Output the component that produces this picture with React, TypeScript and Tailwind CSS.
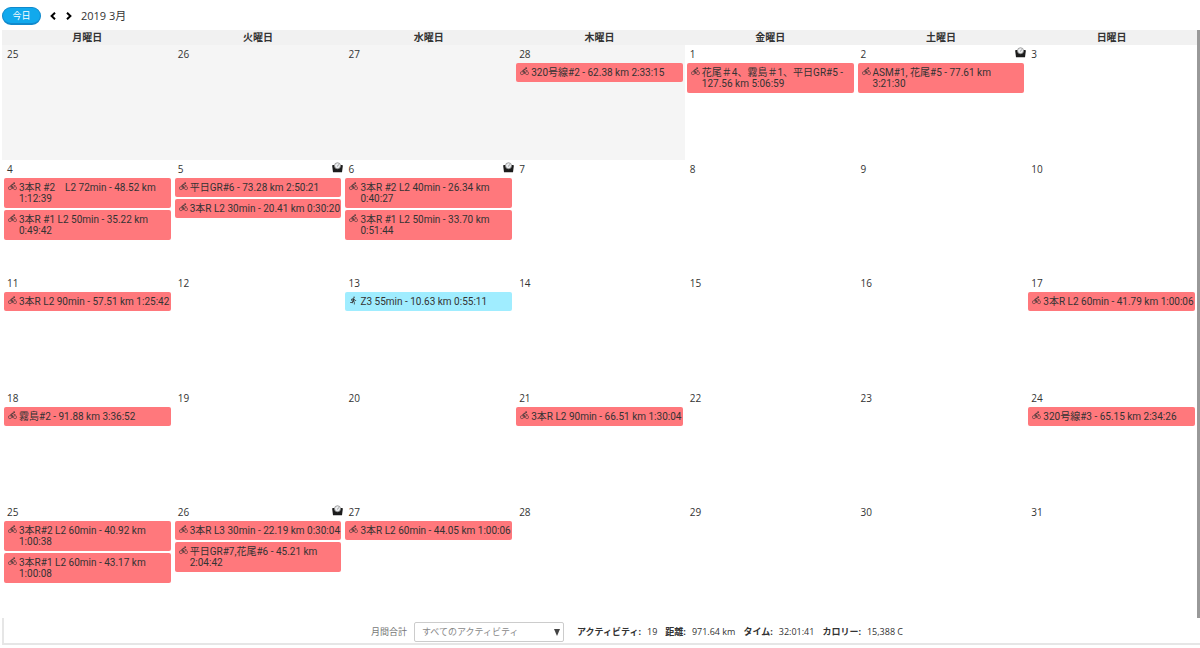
import { MdDirectionsRun } from "react-icons/md";

type Activity = { title: string; kind?: "bike" | "run" };
type Day = { day: number; outside?: boolean; weighed?: boolean; activities?: Activity[] };

const weekdays = ["月曜日", "火曜日", "水曜日", "木曜日", "金曜日", "土曜日", "日曜日"];

const weeks: Day[][] = [
  [
    { day: 25, outside: true },
    { day: 26, outside: true },
    { day: 27, outside: true },
    { day: 28, outside: true, activities: [{ title: "320号線#2 - 62.38 km 2:33:15" }] },
    { day: 1, activities: [{ title: "花尾＃4、霧島＃1、平日GR#5 - 127.56 km 5:06:59" }] },
    { day: 2, weighed: true, activities: [{ title: "ASM#1, 花尾#5 - 77.61 km 3:21:30" }] },
    { day: 3 },
  ],
  [
    {
      day: 4,
      activities: [
        { title: "3本R #2　L2 72min - 48.52 km 1:12:39" },
        { title: "3本R #1 L2 50min - 35.22 km 0:49:42" },
      ],
    },
    {
      day: 5,
      weighed: true,
      activities: [
        { title: "平日GR#6 - 73.28 km 2:50:21" },
        { title: "3本R L2 30min - 20.41 km 0:30:20" },
      ],
    },
    {
      day: 6,
      weighed: true,
      activities: [
        { title: "3本R #2 L2 40min - 26.34 km 0:40:27" },
        { title: "3本R #1 L2 50min - 33.70 km 0:51:44" },
      ],
    },
    { day: 7 },
    { day: 8 },
    { day: 9 },
    { day: 10 },
  ],
  [
    { day: 11, activities: [{ title: "3本R L2 90min - 57.51 km 1:25:42" }] },
    { day: 12 },
    { day: 13, activities: [{ title: "Z3 55min - 10.63 km 0:55:11", kind: "run" }] },
    { day: 14 },
    { day: 15 },
    { day: 16 },
    { day: 17, activities: [{ title: "3本R L2 60min - 41.79 km 1:00:06" }] },
  ],
  [
    { day: 18, activities: [{ title: "霧島#2 - 91.88 km 3:36:52" }] },
    { day: 19 },
    { day: 20 },
    { day: 21, activities: [{ title: "3本R L2 90min - 66.51 km 1:30:04" }] },
    { day: 22 },
    { day: 23 },
    { day: 24, activities: [{ title: "320号線#3 - 65.15 km 2:34:26" }] },
  ],
  [
    {
      day: 25,
      activities: [
        { title: "3本R#2 L2 60min - 40.92 km 1:00:38" },
        { title: "3本R#1 L2 60min - 43.17 km 1:00:08" },
      ],
    },
    {
      day: 26,
      weighed: true,
      activities: [
        { title: "3本R L3 30min - 22.19 km 0:30:04" },
        { title: "平日GR#7,花尾#6 - 45.21 km 2:04:42" },
      ],
    },
    { day: 27, activities: [{ title: "3本R L2 60min - 44.05 km 1:00:06" }] },
    { day: 28 },
    { day: 29 },
    { day: 30 },
    { day: 31 },
  ],
];

const totals = [
  { label: "アクティビティ:", value: "19" },
  { label: "距離:", value: "971.64 km" },
  { label: "タイム:", value: "32:01:41" },
  { label: "カロリー:", value: "15,388 C" },
];

function BikeIcon() {
  return (
    <svg viewBox="0 0 20 20" className="size-[9px] shrink-0 opacity-80" fill="none" stroke="currentColor" aria-hidden="true">
      <circle cx="4.4" cy="13.6" r="3.5" strokeWidth="1.5" />
      <circle cx="15.6" cy="13.6" r="3.5" strokeWidth="1.5" />
      <circle cx="13.6" cy="2.6" r="2.1" fill="currentColor" stroke="none" />
      <path d="M11.6 4.6 6.4 8.6l4 2.4-.6 4" strokeWidth="2.8" strokeLinejoin="round" />
      <path d="m11 5 2.4 3h3.4" strokeWidth="1.8" />
    </svg>
  );
}

function ScaleIcon() {
  return (
    <svg viewBox="0 0 22 22" className="size-[11px]" role="img" aria-label="体重">
      <path d="M1 6h4l6 8 6-8h4l.6 2L20 20.500H2L.4 8z" fill="#1c1c1c" />
      <path d="M3 12h16v8H3z" fill="#1c1c1c" />
      <circle cx="11" cy="7.500" r="6" fill="#eceef0" stroke="#8a8a8a" strokeWidth="1.6" />
      <path d="m11 9 2-4" stroke="#777" strokeWidth="1.4" />
    </svg>
  );
}

function Chevron({ d }: { d: string }) {
  return (
    <svg viewBox="0 0 8 8" className="size-2" fill="none" stroke="currentColor" strokeWidth="2" aria-hidden="true">
      <path d={d} />
    </svg>
  );
}

function ActivityLink({ title, kind = "bike" }: Activity) {
  const run = kind === "run";
  return (
    <a
      href="#activity"
      className={`flex items-start gap-[2px] rounded-[2px] py-1 pl-1 font-['Roboto','Noto_Sans_CJK_JP',sans-serif] text-[10px] leading-[11px] text-[#333] ${
        run ? "bg-[#a0edff]" : "bg-[#ff787c]"
      }`}
    >
      {run ? <MdDirectionsRun className="size-[9px] shrink-0" /> : <BikeIcon />}
      <span>{title}</span>
    </a>
  );
}

export default function App() {
  return (
    <div className="flex min-h-screen flex-col bg-white pb-[3px] pl-[2px] font-['Open_Sans','Noto_Sans_CJK_JP',sans-serif] text-[#333]">
      <header className="flex h-[30px] items-center pt-[2px]">
        <button
          type="button"
          className="h-[18px] w-[39px] rounded-full border border-b-2 border-[#1089cc] bg-[#11a9ed] text-[9px] leading-[14px] text-white"
        >
          今日
        </button>
        <button type="button" aria-label="前の月" className="ml-2 text-black">
          <Chevron d="M6 .7 2.6 4 6 7.3" />
        </button>
        <button type="button" aria-label="次の月" className="ml-2 text-black">
          <Chevron d="M2 .7 5.4 4 2 7.3" />
        </button>
        <h1 className="ml-2 text-[11px]">2019 3月</h1>
      </header>

      <div className="flex flex-1 border-r-[3px] border-[#999]">
        <table className="grid flex-1 grid-rows-[auto_1fr]">
          <thead className="grid">
            <tr className="grid grid-cols-7 bg-[#f1f1f1]">
              {weekdays.map((name) => (
                <th key={name} scope="col" className="text-center text-[10px] leading-[15px] font-bold">
                  {name}
                </th>
              ))}
            </tr>
          </thead>
          <tbody className="grid auto-rows-fr">
            {weeks.map((week, index) => (
              <tr key={index} className="grid grid-cols-7">
                {week.map((d) => (
                  <td key={d.day} className={d.outside ? "bg-[#f5f5f5]" : ""}>
                    <div className="flex h-[18px] items-start justify-between pt-[2px] pl-[5px]">
                      <span className="text-[10px] leading-[15px]">{d.day}</span>
                      {d.weighed && <ScaleIcon />}
                    </div>
                    <div className="flex flex-col gap-[2px] pr-[2px] pl-[2px]">
                      {d.activities?.map((a) => (
                        <ActivityLink key={a.title} {...a} />
                      ))}
                    </div>
                  </td>
                ))}
              </tr>
            ))}
          </tbody>
        </table>
      </div>

      <footer className="flex h-[27px] items-center justify-center border-b-2 border-l-2 border-[#e6e6e6] pt-[2px] pl-[70px] text-[9px]">
        <label htmlFor="activity-type" className="text-[#777]">
          月間合計
        </label>
        <div className="relative ml-[7px]">
          <select
            id="activity-type"
            className="h-5 w-[150px] appearance-none rounded-[2px] border border-[#ccc] bg-white pl-[7px] text-[#888]"
          >
            <option>すべてのアクティビティ</option>
          </select>
          <svg viewBox="0 0 6 7" className="pointer-events-none absolute top-[7px] right-1 h-[7px] w-[6px]" aria-hidden="true">
            <path d="M0 0h6L3 7z" fill="#444" />
          </svg>
        </div>
        <dl className="ml-[13px] flex gap-2">
          {totals.map((t) => (
            <div key={t.label} className="flex gap-[6px]">
              <dt className="font-bold">{t.label}</dt>
              <dd>{t.value}</dd>
            </div>
          ))}
        </dl>
      </footer>
    </div>
  );
}
